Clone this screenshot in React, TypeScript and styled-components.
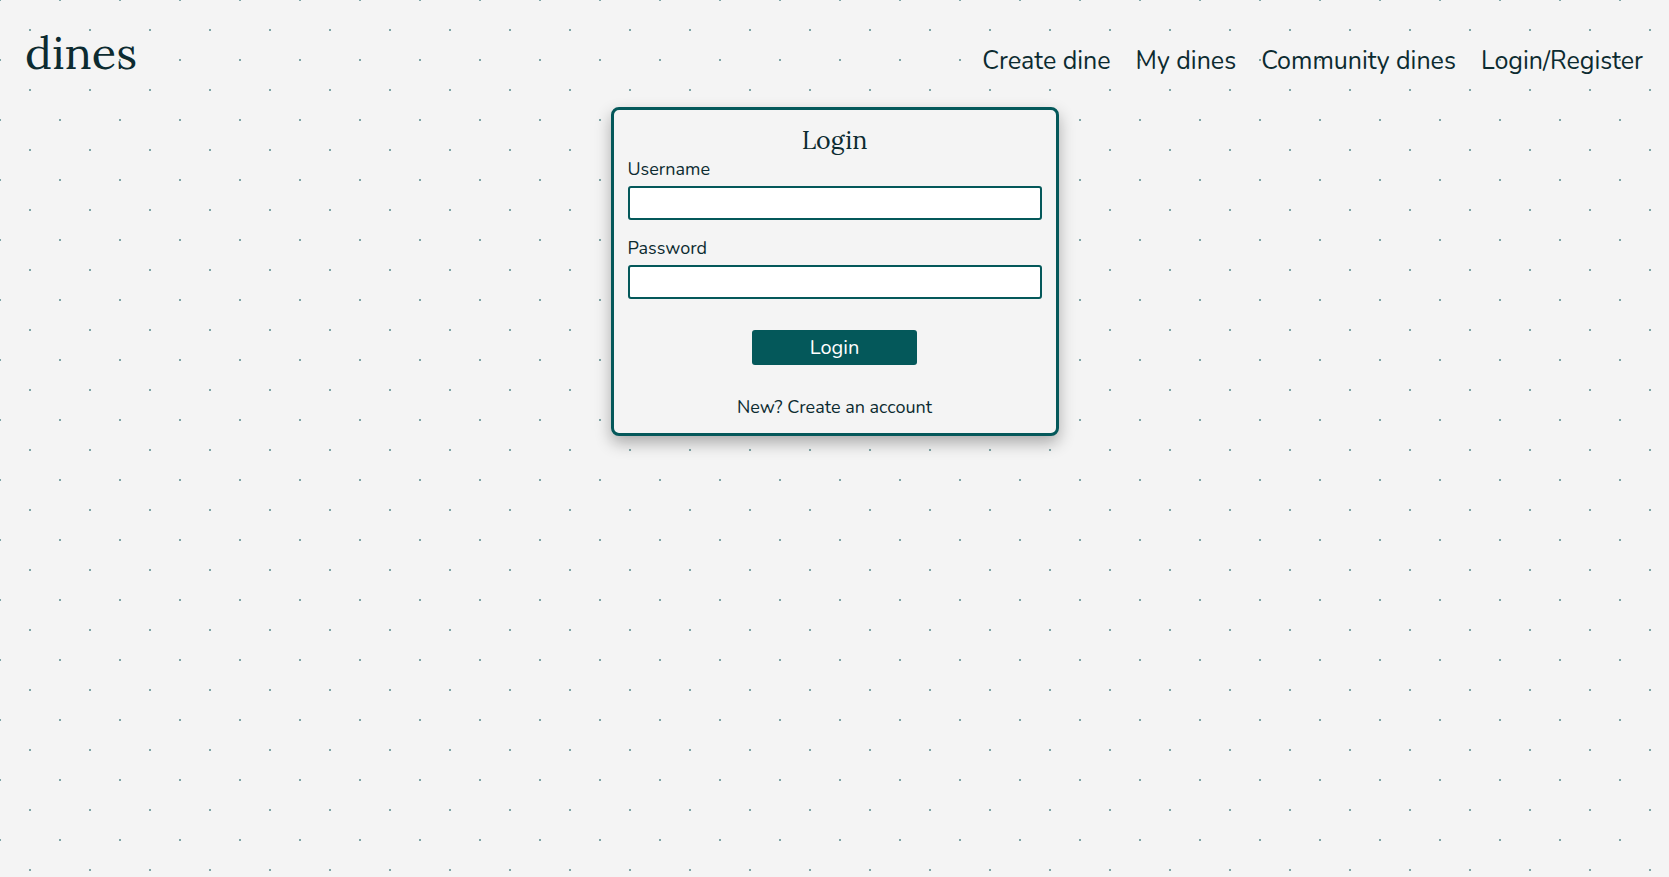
import React from "react";
import styled, { createGlobalStyle } from "styled-components";

const TEAL = "#04585a";
const INK = "#0c2b30";
const BG = "#f4f4f4";
const DOT = "#7fa6a8";

const GlobalStyle = createGlobalStyle`
  html, body {
    margin: 0;
    padding: 0;
  }
  body {
    min-height: 100vh;
    background-color: ${BG};
    background-image:
      radial-gradient(circle at 30px 30px, ${DOT} 0.9px, transparent 1.4px),
      radial-gradient(circle at 30px 30px, ${DOT} 0.9px, transparent 1.4px);
    background-size: 60px 60px, 60px 60px;
    background-position: 0 0, 30px 30px;
    font-family: "Nunito", "Lato", "Noto Sans", sans-serif;
    color: ${INK};
  }
  * { box-sizing: border-box; }
`;

const Page = styled.div`
  min-height: 100vh;
  display: flex;
  flex-direction: column;
`;

const Header = styled.header`
  display: flex;
  justify-content: space-between;
  align-items: baseline;
  padding: 23px 26px 0 25px;
  height: 83px;
`;

const Logo = styled.a`
  font-family: "Lora", "Liberation Serif", "Times New Roman", serif;
  font-size: 45px;
  line-height: 60px;
  color: ${INK};
  text-decoration: none;
`;

const Nav = styled.nav`
  display: flex;
  align-items: baseline;
  gap: 25px;
`;

const NavLink = styled.a`
  font-size: 25px;
  line-height: 30px;
  color: ${INK};
  text-decoration: none;
  cursor: pointer;
`;

const Main = styled.main`
  display: flex;
  justify-content: center;
  padding-top: 24px;
`;

const Card = styled.form`
  width: 448px;
  border: 3px solid ${TEAL};
  border-radius: 8px;
  background: ${BG};
  box-shadow: 0 7px 16px rgba(0, 0, 0, 0.3);
  padding: 14px 14px 15px;
  display: flex;
  flex-direction: column;
`;

const Title = styled.h2`
  margin: 0;
  font-family: "Lora", "Liberation Serif", "Times New Roman", serif;
  font-weight: 400;
  font-size: 25px;
  line-height: 32px;
  text-align: center;
  color: ${INK};
`;

const Field = styled.div<{ $first?: boolean }>`
  display: flex;
  flex-direction: column;
  margin-top: ${(p) => (p.$first ? "1px" : "16px")};
`;

const Label = styled.label`
  font-size: 18px;
  line-height: 24px;
  margin-bottom: 5px;
  color: ${INK};
`;

const Input = styled.input`
  height: 34px;
  width: 100%;
  border: 2px solid ${TEAL};
  border-radius: 3px;
  background: #ffffff;
  font-family: inherit;
  font-size: 18px;
  padding: 0 6px;
  outline: none;
`;

const Button = styled.button`
  align-self: center;
  margin-top: 31px;
  width: 165px;
  height: 35px;
  border: none;
  border-radius: 3px;
  background: ${TEAL};
  color: #ffffff;
  font-family: "Nunito", "Lato", "Noto Sans", sans-serif;
  font-size: 20px;
  line-height: 35px;
  cursor: pointer;
  padding: 0;
`;

const Footer = styled.p`
  margin: 31px 0 0;
  font-size: 18px;
  line-height: 22px;
  text-align: center;
  color: ${INK};
`;

export default function App() {
  return (
    <>
      <GlobalStyle />
      <Page>
        <Header>
          <Logo href="#">dines</Logo>
          <Nav>
            <NavLink>Create dine</NavLink>
            <NavLink>My dines</NavLink>
            <NavLink>Community dines</NavLink>
            <NavLink>Login/Register</NavLink>
          </Nav>
        </Header>
        <Main>
          <Card onSubmit={(e) => e.preventDefault()}>
            <Title>Login</Title>
            <Field $first>
              <Label htmlFor="username">Username</Label>
              <Input id="username" type="text" />
            </Field>
            <Field>
              <Label htmlFor="password">Password</Label>
              <Input id="password" type="password" />
            </Field>
            <Button type="submit">Login</Button>
            <Footer>New? Create an account</Footer>
          </Card>
        </Main>
      </Page>
    </>
  );
}
